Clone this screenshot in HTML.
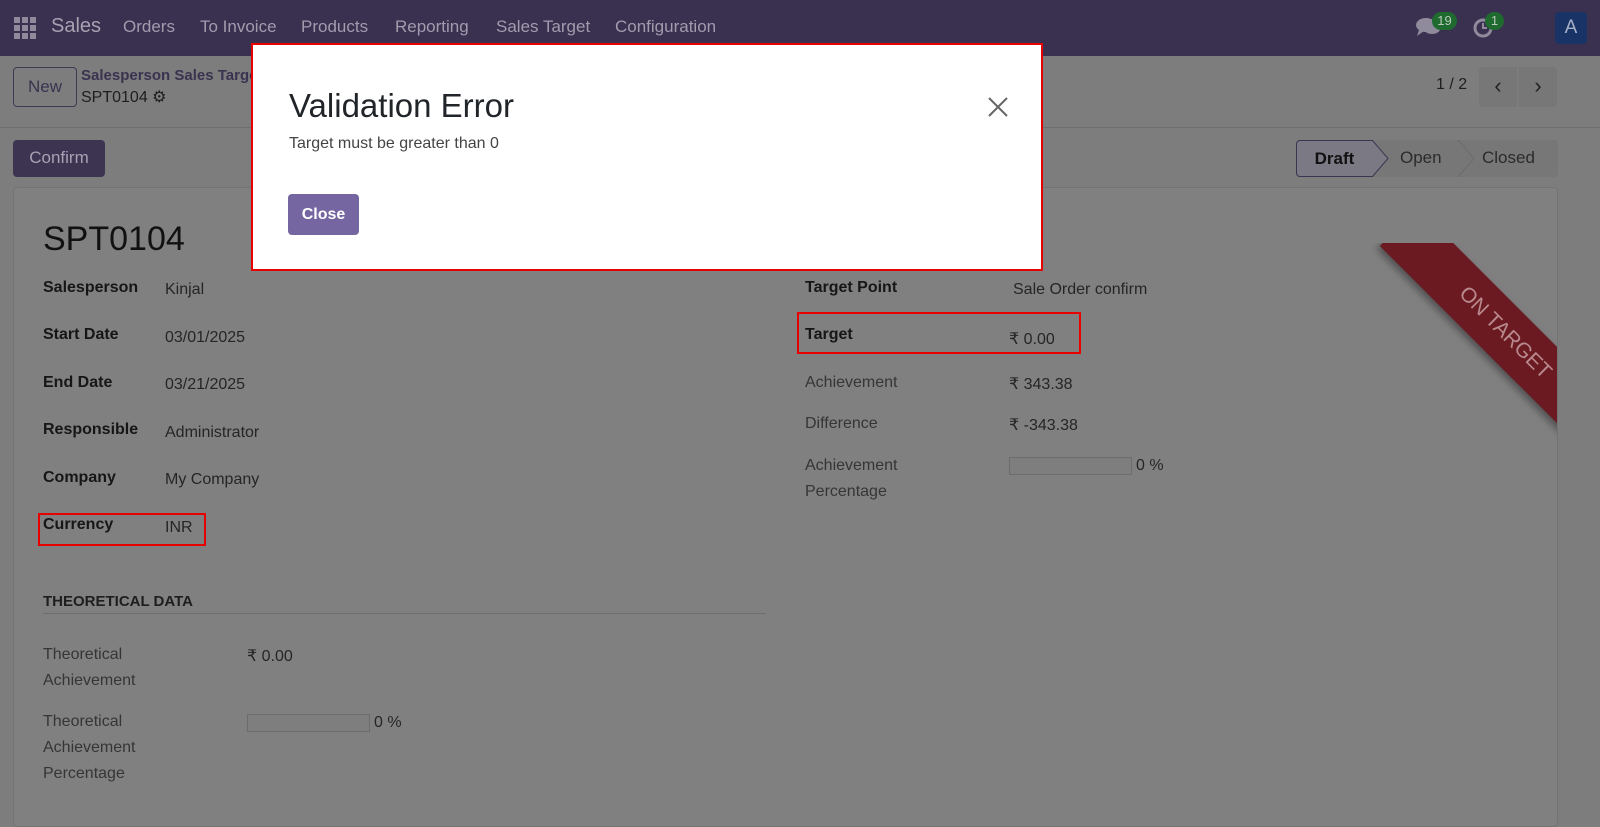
<!DOCTYPE html>
<html><head><meta charset="utf-8"><style>
*{box-sizing:border-box;margin:0;padding:0}
body{width:1600px;height:815px;overflow:hidden;background:#7d7d7d;font-family:"Liberation Sans","DejaVu Sans",sans-serif;color:#141414;position:relative;font-size:16px}
.nav{position:absolute;left:0;top:0;width:1600px;height:56px;background:#3a3050;color:#a19cae}
.nav span{position:absolute;top:17px;font-size:17px}
.abs{position:absolute}
.card{position:absolute;left:13px;top:187px;width:1545px;height:640px;border:1px solid #737373;border-radius:4px;background:#808080;overflow:hidden}
.lbl{position:absolute;font-weight:bold;font-size:16px;color:#161616}
.lblg{position:absolute;font-size:16px;color:#353535;line-height:26px}
.val{position:absolute;font-size:16px;color:#252525}
.red{position:absolute;border:2px solid #e80000}
</style></head><body>
<div class="nav">
 <svg class="abs" style="left:14px;top:17px" width="22" height="22" viewBox="0 0 22 22" fill="#8f8a9c"><rect x="0" y="0" width="6" height="6"/><rect x="8" y="0" width="6" height="6"/><rect x="16" y="0" width="6" height="6"/><rect x="0" y="8" width="6" height="6"/><rect x="8" y="8" width="6" height="6"/><rect x="16" y="8" width="6" height="6"/><rect x="0" y="16" width="6" height="6"/><rect x="8" y="16" width="6" height="6"/><rect x="16" y="16" width="6" height="6"/></svg>
 <span style="left:51px;top:15px;font-size:20px;color:#a6a2b1">Sales</span>
 <span style="left:123px">Orders</span><span style="left:200px">To Invoice</span><span style="left:301px">Products</span><span style="left:395px">Reporting</span><span style="left:496px">Sales Target</span><span style="left:615px">Configuration</span>
 <svg class="abs" style="left:1416px;top:17px" width="26" height="20" viewBox="0 0 26 20" fill="#8f8a9c"><ellipse cx="10" cy="8" rx="10" ry="7"/><path d="M3 13 L1 19 L8 14Z"/><ellipse cx="16" cy="12" rx="8" ry="5"/></svg>
 <div class="abs" style="left:1432px;top:12px;width:25px;height:18px;border-radius:9px;background:#1e6a2f;color:#b9c9bb;font-size:13px;text-align:center;line-height:18px">19</div>
 <svg class="abs" style="left:1473px;top:17px" width="22" height="22" viewBox="0 0 22 22"><circle cx="10" cy="11" r="8" fill="none" stroke="#8f8a9c" stroke-width="3"/><path d="M10 6v5h4" stroke="#8f8a9c" stroke-width="2" fill="none"/></svg>
 <div class="abs" style="left:1485px;top:12px;width:19px;height:18px;border-radius:9px;background:#1e6a2f;color:#b9c9bb;font-size:13px;text-align:center;line-height:18px">1</div>
 <div class="abs" style="left:1555px;top:12px;width:32px;height:32px;border-radius:4px;background:#193366;color:#a7b0c6;font-size:19px;text-align:center;line-height:32px">A</div>
</div>
<div class="abs" style="left:0;top:127px;width:1600px;height:1px;background:#6d6d6d"></div>
<div class="abs" style="left:13px;top:67px;width:64px;height:40px;border:1px solid #3f3a52;border-radius:4px;color:#3a3350;font-size:17px;text-align:center;line-height:38px">New</div>
<div class="abs" style="left:81px;top:67px;color:#3a3350;font-weight:bold;font-size:15px">Salesperson Sales Targe</div>
<div class="abs" style="left:81px;top:87px;color:#1e1e1e;font-size:16px">SPT0104 <span style="font-size:16px">⚙</span></div>
<div class="abs" style="left:1436px;top:76px;color:#1e1e1e;font-size:16px">1 / 2</div>
<div class="abs" style="left:1479px;top:67px;width:38px;height:40px;background:#777;border-radius:4px 0 0 4px;color:#222;font-size:22px;text-align:center;line-height:38px">‹</div>
<div class="abs" style="left:1519px;top:67px;width:38px;height:40px;background:#777;border-radius:0 4px 4px 0;color:#222;font-size:22px;text-align:center;line-height:38px">›</div>
<div class="abs" style="left:13px;top:140px;width:92px;height:37px;background:#3d3452;border-radius:4px;color:#a6a2b1;font-size:17px;text-align:center;line-height:36px">Confirm</div>
<div class="abs" style="left:1296px;top:140px;width:262px;height:37px;background:#777;border-radius:4px"></div>
<div class="abs" style="left:1296px;top:140px;width:77px;height:37px;border:1px solid #3d3452;border-radius:4px 0 0 4px;background:#7b7a84;color:#111;font-weight:bold;font-size:17px;text-align:center;line-height:35px">Draft</div>
<svg class="abs" style="left:1372px;top:140px" width="200" height="37"><path d="M0 0 L16 18.5 L0 37" fill="#7b7a84" stroke="#3d3452"/><path d="M86 0 L102 18.5 L86 37" fill="none" stroke="#6b6b6b"/></svg>
<div class="abs" style="left:1400px;top:148px;color:#2b2b2b;font-size:17px">Open</div>
<div class="abs" style="left:1482px;top:148px;color:#2b2b2b;font-size:17px">Closed</div>

<div class="card">
 <div class="abs" style="left:29px;top:32px;font-size:34px;color:#111">SPT0104</div>
 <div class="lbl" style="left:29px;top:91px">Salesperson</div><div class="val" style="left:151px;top:93px">Kinjal</div>
 <div class="lbl" style="left:29px;top:138px">Start Date</div><div class="val" style="left:151px;top:141px">03/01/2025</div>
 <div class="lbl" style="left:29px;top:186px">End Date</div><div class="val" style="left:151px;top:188px">03/21/2025</div>
 <div class="lbl" style="left:29px;top:233px">Responsible</div><div class="val" style="left:151px;top:236px">Administrator</div>
 <div class="lbl" style="left:29px;top:281px">Company</div><div class="val" style="left:151px;top:283px">My Company</div>
 <div class="lbl" style="left:29px;top:328px">Currency</div><div class="val" style="left:151px;top:331px">INR</div>
 <div class="red" style="left:24px;top:325px;width:168px;height:33px"></div>
 <div class="abs" style="left:29px;top:405px;font-weight:bold;font-size:15px;color:#1e1e1e">THEORETICAL DATA</div>
 <div class="abs" style="left:29px;top:425px;width:723px;height:1px;background:#6e6e6e"></div>
 <div class="lblg" style="left:29px;top:454px">Theoretical<br>Achievement</div><div class="val" style="left:233px;top:458px">₹ 0.00</div>
 <div class="lblg" style="left:29px;top:521px">Theoretical<br>Achievement<br>Percentage</div>
 <div class="abs" style="left:233px;top:526px;width:123px;height:18px;border:1px solid #6c6c6c;background:#7e7e7e"></div><div class="val" style="left:360px;top:526px">0 %</div>

 <div class="lbl" style="left:791px;top:91px">Target Point</div><div class="val" style="left:999px;top:93px">Sale Order confirm</div>
 <div class="lbl" style="left:791px;top:138px">Target</div><div class="val" style="left:995px;top:141px">₹ 0.00</div>
 <div class="red" style="left:783px;top:124px;width:284px;height:42px"></div>
 <div class="lblg" style="left:791px;top:182px">Achievement</div><div class="val" style="left:995px;top:186px">₹ 343.38</div>
 <div class="lblg" style="left:791px;top:223px">Difference</div><div class="val" style="left:995px;top:227px">₹ -343.38</div>
 <div class="lblg" style="left:791px;top:265px">Achievement<br>Percentage</div>
 <div class="abs" style="left:995px;top:269px;width:123px;height:18px;border:1px solid #6c6c6c;background:#7e7e7e"></div><div class="val" style="left:1122px;top:269px">0 %</div>
</div>
<div class="abs" style="left:1365px;top:243px;width:192px;height:200px;overflow:hidden">
 <div class="abs" style="left:-10px;top:63px;width:300px;height:54px;background:#6b1a22;transform:rotate(45deg);color:#b88a8e;font-size:21px;text-align:center;line-height:54px;box-shadow:0 4px 8px rgba(0,0,0,.4)">ON TARGET</div>
</div>

<div class="abs" style="left:251px;top:43px;width:792px;height:228px;background:#fff;border:2px solid #e80000">
 <div class="abs" style="left:36px;top:42px;font-size:33px;color:#212529">Validation Error</div>
 <div class="abs" style="left:36px;top:90px;font-size:16px;color:#444">Target must be greater than 0</div>
 <svg class="abs" style="left:735px;top:52px" width="20" height="20"><path d="M1 1L19 19M19 1L1 19" stroke="#666" stroke-width="2"/></svg>
 <div class="abs" style="left:35px;top:149px;width:71px;height:41px;background:#7565a0;border-radius:4px;color:#fff;font-weight:bold;font-size:16px;text-align:center;line-height:41px">Close</div>
</div>
</body></html>
